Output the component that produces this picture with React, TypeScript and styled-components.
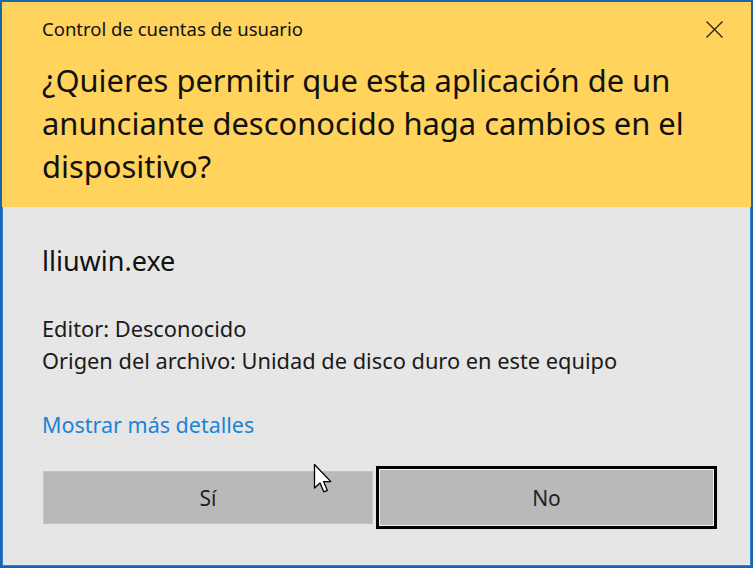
import styled, { createGlobalStyle } from 'styled-components';

const GlobalStyle = createGlobalStyle({
    'html, body': {
        margin: 0,
        padding: 0,
        background: '#e6e6e6'
    },
    body: {
        fontFamily: '"Noto Sans", "Open Sans", sans-serif',
        color: '#1a1a1a'
    }
});

const Window = styled.div({
    position: 'relative',
    width: '753px',
    height: '568px',
    boxSizing: 'border-box',
    border: '2px solid #1a65ab',
    boxShadow: 'inset 0 0 0 1px #2f86d0',
    background: '#e6e6e6',
    display: 'flex',
    flexDirection: 'column',
    overflow: 'hidden'
});

const Header = styled.div({
    background: '#ffd35c',
    height: '205px',
    flexShrink: 0,
    boxSizing: 'border-box',
    padding: '14px 40px 0 40px',
    display: 'flex',
    flexDirection: 'column'
});

const TitleRow = styled.div({
    display: 'flex',
    alignItems: 'center',
    justifyContent: 'space-between',
    height: '26px'
});

const Title = styled.span({
    fontSize: '18.5px',
    lineHeight: '26px',
    color: '#111'
});

const CloseButton = styled.button({
    border: 'none',
    background: 'transparent',
    padding: 0,
    marginRight: '-14px',
    width: '22px',
    height: '22px',
    display: 'flex',
    alignItems: 'center',
    justifyContent: 'center',
    cursor: 'default'
});

const Question = styled.h1({
    margin: '17px 0 0 0',
    fontSize: '30.9px',
    fontWeight: 400,
    lineHeight: '43px',
    color: '#111',
    whiteSpace: 'nowrap'
});

const Body = styled.div({
    flex: 1,
    padding: '36px 40px 0 40px',
    display: 'flex',
    flexDirection: 'column'
});

const FileName = styled.div({
    fontSize: '27px',
    lineHeight: '36px',
    color: '#111'
});

const Details = styled.div({
    marginTop: '34px',
    fontSize: '21.8px',
    lineHeight: '32px',
    whiteSpace: 'nowrap'
});

const MoreLink = styled.a({
    marginTop: '32px',
    fontSize: '21.5px',
    lineHeight: '32px',
    color: '#1c83d6',
    textDecoration: 'none',
    alignSelf: 'flex-start'
});

const Buttons = styled.div({
    marginTop: '25px',
    marginLeft: '1px',
    display: 'flex',
    alignItems: 'center',
    gap: '3px'
});

const DialogButton = styled.button<{ $focused?: boolean }>((props) => ({
    width: props.$focused ? '341px' : '330px',
    height: props.$focused ? '63px' : '53px',
    flexShrink: 0,
    boxSizing: 'border-box',
    background: '#b9b9b9',
    border: props.$focused ? '3px solid #000' : '1px solid #c4c4c4',
    boxShadow: props.$focused ? 'inset 0 0 0 1px #f0f0f0' : 'none',
    fontFamily: '"Noto Sans", "Open Sans", sans-serif',
    fontSize: '21px',
    color: '#222',
    padding: 0,
    cursor: 'default'
}));

const Pointer = styled.svg({
    position: 'absolute',
    left: '311px',
    top: '461px'
});

export default function App() {
    return (
        <>
            <GlobalStyle />
            <Window>
                <Header>
                    <TitleRow>
                        <Title>Control de cuentas de usuario</Title>
                        <CloseButton aria-label="Cerrar">
                            <svg width="17" height="17" viewBox="0 0 17 17">
                                <path d="M0.5 0.5 L16.5 16.5 M16.5 0.5 L0.5 16.5" stroke="#222" strokeWidth="1.3" />
                            </svg>
                        </CloseButton>
                    </TitleRow>
                    <Question>
                        ¿Quieres permitir que esta aplicación de un
                        <br />
                        anunciante desconocido haga cambios en el
                        <br />
                        dispositivo?
                    </Question>
                </Header>
                <Body>
                    <FileName>lliuwin.exe</FileName>
                    <Details>
                        Editor: Desconocido
                        <br />
                        Origen del archivo: Unidad de disco duro en este equipo
                    </Details>
                    <MoreLink href="#">Mostrar más detalles</MoreLink>
                    <Buttons>
                        <DialogButton>Sí</DialogButton>
                        <DialogButton $focused>No</DialogButton>
                    </Buttons>
                </Body>
                <Pointer width="20" height="32" viewBox="0 0 20 32">
                    <path
                        d="M1.5 1.5 L1.5 25 L7 20 L10.8 28.8 L14.3 27.3 L10.6 18.6 L17.8 18.6 Z"
                        fill="#fff"
                        stroke="#000"
                        strokeWidth="1.3"
                        strokeLinejoin="round"
                    />
                </Pointer>
            </Window>
        </>
    );
}
